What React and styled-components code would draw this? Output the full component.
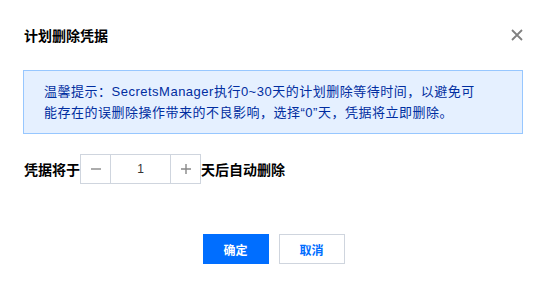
import styled, { createGlobalStyle } from "styled-components";

const GlobalStyle = createGlobalStyle`
  body {
    margin: 0;
    background: #fff;
    font-family: "Liberation Sans", "Noto Sans CJK SC", sans-serif;
    color: #000;
  }
`;

const Dialog = styled.div`
  width: 546px;
  height: 284px;
  box-sizing: border-box;
  padding: 20px 23px 0 23px;
`;

const Header = styled.div`
  display: flex;
  justify-content: space-between;
  align-items: center;
  height: 30px;
  margin-bottom: 20px;
  padding-left: 1px;
`;

const Title = styled.h2`
  margin: 0;
  font-size: 14px;
  font-weight: bold;
  color: #000;
`;

const Close = styled.button`
  border: 0;
  background: none;
  padding: 0;
  width: 13px;
  height: 13px;
  display: flex;
  align-items: center;
  justify-content: center;
  cursor: pointer;
`;

const Alert = styled.div`
  border: 1px solid #97c7ff;
  background: #e5f0ff;
  padding: 10px 20px;
  font-size: 13px;
  line-height: 21px;
  letter-spacing: 0.5px;
  white-space: nowrap;
  color: #002da0;
`;

const Row = styled.div`
  display: flex;
  align-items: center;
  margin-top: 20px;
  padding-left: 1px;
  font-size: 14px;
  font-weight: bold;
  color: #000;
`;

const Stepper = styled.div`
  display: flex;
  height: 30px;
  box-sizing: border-box;
  border: 1px solid #cfd5de;
  background: #fff;
`;

const StepButton = styled.button`
  width: 30px;
  border: 0;
  background: #fff;
  padding: 0;
  display: flex;
  align-items: center;
  justify-content: center;
  cursor: pointer;
  border-left: ${(p) => (p.$side === "right" ? "1px solid #cfd5de" : "0")};
  border-right: ${(p) => (p.$side === "left" ? "1px solid #cfd5de" : "0")};
`;

const StepValue = styled.div`
  width: 59px;
  display: flex;
  align-items: center;
  justify-content: center;
  font-size: 12px;
  font-weight: normal;
  color: #333;
`;

const Footer = styled.div`
  display: flex;
  justify-content: center;
  gap: 10px;
  margin-top: 50px;
  padding-left: 1px;
`;

const Button = styled.button`
  width: 66px;
  height: 30px;
  box-sizing: border-box;
  font-family: inherit;
  font-size: 12px;
  font-weight: bold;
  cursor: pointer;
  border: 1px solid ${(p) => (p.$primary ? "#006eff" : "#cfd5de")};
  background: ${(p) => (p.$primary ? "#006eff" : "#fff")};
  color: ${(p) => (p.$primary ? "#fff" : "#006eff")};
`;

const App = () => {
  return (
    <>
      <GlobalStyle />
      <Dialog>
        <Header>
          <Title>计划删除凭据</Title>
          <Close>
            <svg width="12" height="12" viewBox="0 0 12 12">
              <path d="M1 1 L11 11 M11 1 L1 11" stroke="#808080" strokeWidth="1.8" />
            </svg>
          </Close>
        </Header>
        <Alert>
          温馨提示：SecretsManager执行0~30天的计划删除等待时间，以避免可
          <br />
          能存在的误删除操作带来的不良影响，选择“0”天，凭据将立即删除。
        </Alert>
        <Row>
          凭据将于
          <Stepper>
            <StepButton $side="left">
              <svg width="12" height="12" viewBox="0 0 12 12">
                <path d="M1 6 H11" stroke="#888" strokeWidth="1.4" />
              </svg>
            </StepButton>
            <StepValue>1</StepValue>
            <StepButton $side="right">
              <svg width="12" height="12" viewBox="0 0 12 12">
                <path d="M1 6 H11 M6 1 V11" stroke="#888" strokeWidth="1.4" />
              </svg>
            </StepButton>
          </Stepper>
          天后自动删除
        </Row>
        <Footer>
          <Button $primary>确定</Button>
          <Button>取消</Button>
        </Footer>
      </Dialog>
    </>
  );
};

export default App;
